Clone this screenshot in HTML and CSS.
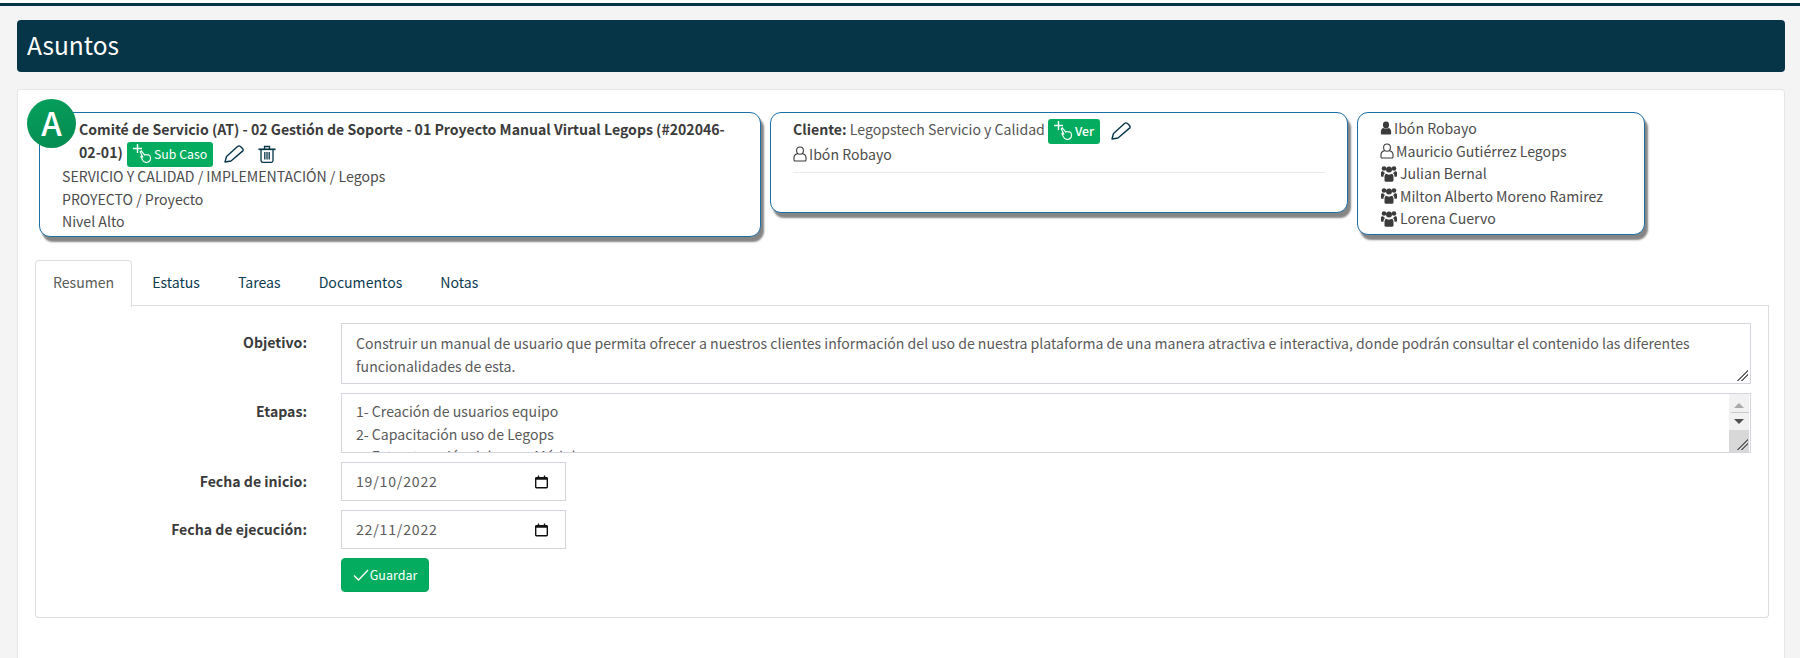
FILE: index.html
```html
<!DOCTYPE html>
<html lang="es">
<head>
<meta charset="utf-8">
<title>Asuntos</title>
<link rel="stylesheet" href="styles.css">
</head>
<body>
<svg class="defs" width="0" height="0" aria-hidden="true">
  <defs>
    <symbol id="hand" viewBox="0 0 20 20">
      <path d="M4.500 0v9M0 4.500h9" fill="none" stroke="currentColor" stroke-width="1.400"/>
      <path d="M8.500 7l3.200 4.100 1.200-.6 1.200.4 1.400 0 1.400 1c.9 1.500.9 3.300.2 4.500-.9 1.600-2.600 2.200-4.200 2-1.800-.2-3-1.300-3.600-2.800l-1.300-2.500c-.3-.7.5-1.100 1.100-.6l1 1-2.800-5.400c-.2-.7.700-1.100 1.200-.6z" fill="none" stroke="currentColor" stroke-width="1.100"/>
    </symbol>
    <symbol id="pencil" viewBox="0 0 20 18">
      <path d="M1 17l1.500-5.500L13.500 1.500c1-.8 2-.8 3 0l2 2c1 1.200.8 2-.3 2.900L7 16z" fill="none" stroke="currentColor" stroke-width="1.400" stroke-linejoin="round"/>
    </symbol>
    <symbol id="trash" viewBox="0 0 18 18">
      <path d="M.5 4.300h17" fill="none" stroke="currentColor" stroke-width="1.700"/>
      <path d="M6.500 4V1.500h5V4M3 5v10.500c0 1.200.7 1.800 1.700 1.800h8.600c1 0 1.700-.6 1.700-1.800V5M6.800 7v7.500M9 7v7.500M11.200 7v7.500" fill="none" stroke="currentColor" stroke-width="1.300"/>
    </symbol>
    <symbol id="user-line" viewBox="0 0 14 16">
      <path d="M7 1c2.100 0 3.400 1.500 3.400 3.500S9.100 8.300 7 8.300 3.600 6.500 3.600 4.500 4.900 1 7 1zM4.600 7.600C2.500 8.200 1 9.500 1 11.500V14c0 .6.400 1 1 1h10c.6 0 1-.4 1-1v-2.500c0-2-1.500-3.300-3.600-3.900" fill="none" stroke="currentColor" stroke-width="1.100"/>
    </symbol>
    <symbol id="user-fill" viewBox="0 0 14 16">
      <ellipse cx="7" cy="4.500" rx="3.600" ry="4"/>
      <path d="M3.800 8c1.800 1.300 4.600 1.300 6.400 0 1.900.6 2.800 2.300 2.800 4.500V14c0 .8-.6 1.500-1.400 1.500H2.400C1.600 15.500 1 14.800 1 14v-1.500C1 10.300 1.900 8.600 3.800 8z"/>
    </symbol>
    <symbol id="users" viewBox="0 0 16 17">
      <circle cx="8" cy="4.500" r="3"/>
      <circle cx="3" cy="3.500" r="2.300"/>
      <circle cx="13" cy="3.500" r="2.300"/>
      <path d="M4.800 8.800c2 1.100 4.400 1.100 6.400 0 1 .8 1.300 2.100 1.300 3.700v3c0 .7-.5 1.200-1.200 1.200H4.700c-.7 0-1.200-.5-1.200-1.200v-3c0-1.700.3-2.900 1.300-3.700z"/>
      <path d="M0 7.800C0 7 .6 6.300 1.400 6.300h.7c.4.800 1.100 1.400 2 1.800C3 8.900 2.500 10.100 2.500 11.700H1c-.6 0-1-.4-1-1zM16 7.800c0-.8-.6-1.500-1.400-1.500h-.7c-.4.800-1.100 1.400-2 1.800 1.100.8 1.600 2 1.600 3.600H15c.6 0 1-.4 1-1z"/>
    </symbol>
    <symbol id="calendar" viewBox="0 0 14 14">
      <path d="M3 0h1.500v1.500h5V0H11v1.500h1.500c.8 0 1.500.7 1.500 1.500v9.500c0 .8-.7 1.500-1.500 1.500h-11C.7 14 0 13.300 0 12.500V3c0-.8.7-1.500 1.500-1.500H3zM1.500 4.500v8h11v-8z"/>
    </symbol>
  </defs>
</svg>

<div class="top-line"></div>
<main class="page">
  <header class="page-title"><h1>Asuntos</h1></header>

  <section class="box">
    <div class="summary">
      <article class="info info-case">
        <span class="avatar">A</span>
        <div class="case-title">Comité de Servicio (AT) - 02 Gestión de Soporte - 01 Proyecto Manual Virtual Legops (#202046-02-01)
          <a class="btn-mini btn-sub"><svg class="i-hand"><use href="#hand"/></svg>Sub Caso</a>
          <svg class="i-action i-pen"><use href="#pencil"/></svg>
          <svg class="i-action i-trash"><use href="#trash"/></svg>
        </div>
        <div>SERVICIO Y CALIDAD / IMPLEMENTACIÓN / Legops</div>
        <div>PROYECTO / Proyecto</div>
        <div>Nivel Alto</div>
      </article>

      <article class="info info-client">
        <div class="client-line"><b>Cliente:</b> Legopstech Servicio y Calidad
          <a class="btn-mini btn-ver"><svg class="i-hand"><use href="#hand"/></svg>Ver</a>
          <svg class="i-action i-pen"><use href="#pencil"/></svg>
        </div>
        <div class="person"><svg class="i-user"><use href="#user-line"/></svg>Ibón Robayo</div>
        <hr class="rule">
      </article>

      <article class="info info-people">
        <div class="person"><svg class="i-user i-user-solid"><use href="#user-fill"/></svg>Ibón Robayo</div>
        <div class="person"><svg class="i-user"><use href="#user-line"/></svg>Mauricio Gutiérrez Legops</div>
        <div class="person"><svg class="i-users"><use href="#users"/></svg>Julian Bernal</div>
        <div class="person"><svg class="i-users"><use href="#users"/></svg>Milton Alberto Moreno Ramirez</div>
        <div class="person"><svg class="i-users"><use href="#users"/></svg>Lorena Cuervo</div>
      </article>
    </div>

    <nav class="tabs">
      <a class="tab active">Resumen</a>
      <a class="tab">Estatus</a>
      <a class="tab">Tareas</a>
      <a class="tab">Documentos</a>
      <a class="tab">Notas</a>
    </nav>

    <form class="panel">
      <label class="lab">Objetivo:</label>
      <textarea class="field area-objetivo">Construir un manual de usuario que permita ofrecer a nuestros clientes información del uso de nuestra plataforma de una manera atractiva e interactiva, donde podrán consultar el contenido las diferentes funcionalidades de esta.</textarea>

      <label class="lab lab-etapas">Etapas:</label>
      <div class="area-wrap">
        <textarea class="field area-etapas">1- Creación de usuarios equipo
2- Capacitación uso de Legops
3- Estructuración del curso Módulos
4- Contenido</textarea>
        <div class="scrollbar" aria-hidden="true">
          <span class="arrow arrow-up"></span>
          <span class="arrow-sep"></span>
          <span class="arrow arrow-down"></span>
          <span class="thumb"></span>
        </div>
      </div>

      <label class="lab lab-mid">Fecha de inicio:</label>
      <div class="date date-a"><input class="date-input" type="text" value="19/10/2022"><svg class="i-cal"><use href="#calendar"/></svg></div>

      <label class="lab lab-mid">Fecha de ejecución:</label>
      <div class="date date-b"><input class="date-input" type="text" value="22/11/2022"><svg class="i-cal"><use href="#calendar"/></svg></div>

      <span></span>
      <button class="btn-save" type="button"><svg class="i-check" viewBox="0 0 16 12"><path d="M1 6.500l4.500 4.500L15 1" fill="none" stroke="currentColor" stroke-width="1.300"/></svg>Guardar</button>
    </form>
  </section>
</main>
</body>
</html>
```
FILE: styles.css
```css
* { box-sizing: border-box; }
html, body { height: 100%; }
body {
  margin: 0;
  background: #f4f4f4;
  color: #4c4c4c;
  font-family: "Noto Sans CJK SC", "Source Sans Pro", "Noto Sans", sans-serif;
  font-size: 14.100px;
  line-height: 22.5px;
  overflow: hidden;
  display: flex;
  flex-direction: column;
}
.defs { position: absolute; }
.top-line {
  flex: none;
  height: 6px;
  background: #f4f4f4;
  border-top: 3px solid #fff;
  box-shadow: inset 0 3px 0 #063548;
}
.page {
  flex: 1;
  display: flex;
  flex-direction: column;
  padding: 14px 15px 0 17px;
  min-height: 0;
}
.page-title {
  flex: none;
  height: 52px;
  background: #063548;
  border-radius: 4px;
  display: flex;
  align-items: center;
  padding-left: 10px;
  padding-bottom: 2px;
}
.page-title h1 {
  margin: 0;
  color: #fff;
  font-size: 24.500px;
  font-weight: 400;
  line-height: 32px;
}
.box {
  flex: 1;
  margin-top: 17px;
  padding: 22px 16px 0 17px;
  background: #fff;
  border: 1px solid #e6e6e6;
  border-bottom: 0;
  border-radius: 4px 4px 0 0;
}
.summary {
  display: flex;
  align-items: flex-start;
  margin-left: 4px;
  gap: 9px;
}
.info {
  position: relative;
  background: #fff;
  border: 1px solid #1b6ea8;
  border-radius: 11px;
  box-shadow: 3px 5px 2px #858585;
}
.info-case { width: 722px; height: 125px; padding: 5px 10px 0 22px; }
.info-client { width: 578px; height: 101px; padding: 3px 22px 0 22px; }
.info-people { width: 288px; height: 123px; padding: 4px 10px 0 22px; }
.avatar {
  position: absolute;
  left: -13px;
  top: -14px;
  width: 49px;
  height: 49px;
  border-radius: 50%;
  background: linear-gradient(160deg, #05a05c, #068a50);
  color: #fff;
  font-size: 33px;
  font-weight: 500;
  line-height: 47px;
  text-align: center;
}
.case-title {
  width: 655px;
  height: 47px;
  margin-left: 17px;
  font-weight: 700;
  color: #3b3b3b;
  line-height: 23px;
}
.btn-mini {
  display: inline-flex;
  align-items: center;
  height: 25px;
  background: #03ac5f;
  border-radius: 3px;
  color: #fff;
  font-weight: 400;
  font-size: 12.300px;
  vertical-align: middle;
  line-height: 25px;
}
.btn-sub { width: 86px; padding-left: 6px; margin-left: 1px; }
.btn-ver { width: 52px; padding-left: 6px; margin-left: 0; font-weight: 500; }
.i-hand { width: 20px; height: 20px; margin-right: 1px; flex: none; color: #fff; }
.i-action { vertical-align: middle; color: #063548; }
.i-pen { width: 20px; height: 18px; margin-left: 8px; }
.i-trash { width: 18px; height: 18px; margin-left: 11px; }
.client-line { height: 27px; line-height: 27px; color: #555; white-space: nowrap; }
.client-line b { color: #3b3b3b; }
.person { display: flex; align-items: center; color: #4c4c4c; }
.i-user { width: 14px; height: 16px; margin-right: 2px; flex: none; color: #3b3b3b; fill: #3b3b3b; }
.i-user-solid { width: 12px; height: 14px; margin-right: 2px; }
.i-users { width: 16px; height: 17px; margin-right: 3px; margin-left: 1px; flex: none; fill: #3b3b3b; }
.rule { border: 0; border-top: 1px solid #eaeaea; margin: 6px 0 0; }
.tabs {
  display: flex;
  margin-top: 23px;
  height: 46px;
  border-bottom: 1px solid #dddddd;
  width: 1734px;
}
.tab {
  height: 46px;
  padding: 0 18px;
  line-height: 43px;
  color: #0e3c50;
  border: 1px solid transparent;
  border-bottom: 0;
}
.tab.active {
  padding: 0 17px;
  margin-right: 1px;
  color: #5a5a5a;
  background: #fff;
  border-color: #dddddd;
  border-radius: 4px 4px 0 0;
  height: 47px;
  position: relative;
}
.panel {
  width: 1734px;
  height: 312px;
  padding: 17px 17px 0 0;
  border: 1px solid #dddddd;
  border-top: 0;
  border-radius: 0 0 4px 4px;
  display: grid;
  grid-template-columns: 271px 1fr;
  column-gap: 34px;
  row-gap: 9px;
  align-content: start;
}
.lab {
  text-align: right;
  font-weight: 700;
  color: #3b3b3b;
  padding-top: 8px;
}
.lab-etapas { padding-top: 7px; }
.lab-mid { padding-top: 0; align-self: center; }
.field {
  display: block;
  width: 100%;
  margin: 0;
  padding: 8px 14px;
  border: 1px solid #d5d5de;
  border-radius: 0;
  font: inherit;
  color: #5a5a5a;
  background: #fff;
  outline: 0;
  overflow: hidden;
}
.area-objetivo { height: 61px; resize: both; }
.area-objetivo::-webkit-resizer {
  background: linear-gradient(135deg, transparent 46%, #666 46%, #666 55%, transparent 55%, transparent 68%, #666 68%, #666 77%, transparent 77%) right 2px bottom 2px / 11px 11px no-repeat;
}
.area-wrap { position: relative; height: 60px; }
.area-etapas { height: 60px; padding-top: 6px; resize: none; }
.scrollbar {
  position: absolute;
  top: 1px;
  right: 2px;
  bottom: 1px;
  width: 20px;
  background: #f1f1f1;
}
.arrow {
  position: absolute;
  left: 5px;
  width: 0;
  height: 0;
  border-left: 5px solid transparent;
  border-right: 5px solid transparent;
}
.arrow-up { top: 9px; border-bottom: 5px solid #a9a9a9; }
.arrow-down { top: 25px; border-top: 5px solid #505050; }
.arrow-sep { position: absolute; left: 2px; right: 0; top: 18px; height: 1px; background: #c8c8c8; }
.thumb {
  position: absolute;
  left: 0;
  right: 0;
  top: 36px;
  bottom: 0;
  background:
    linear-gradient(135deg, transparent 46%, #666 46%, #666 55%, transparent 55%, transparent 68%, #666 68%, #666 77%, transparent 77%) right 1px bottom 2px / 11px 11px no-repeat,
    #d8d8d8;
}
.date {
  display: flex;
  align-items: center;
  width: 225px;
  padding: 0 17px 0 14px;
  background: #fff;
  border: 1px solid #d5d5de;
}
.date-a { height: 39px; }
.date-b { height: 38.500px; }
.date-input {
  flex: 1;
  min-width: 0;
  width: 100%;
  border: 0;
  outline: 0;
  padding: 0;
  font: inherit;
  letter-spacing: .8px;
  color: #5a5a5a;
  background: transparent;
}
.i-cal { width: 13px; height: 14px; flex: none; fill: #111; margin-top: 1px; }
.btn-save {
  display: flex;
  align-items: center;
  justify-content: center;
  width: 88px;
  height: 34px;
  padding: 0;
  border: 1px solid #05a45c;
  border-radius: 4px;
  background: #03ac5f;
  color: #fff;
  font: 400 12.500px/22px "Noto Sans CJK SC", "Noto Sans", sans-serif;
}
.i-check { width: 16px; height: 12px; margin-right: 1px; }
```
